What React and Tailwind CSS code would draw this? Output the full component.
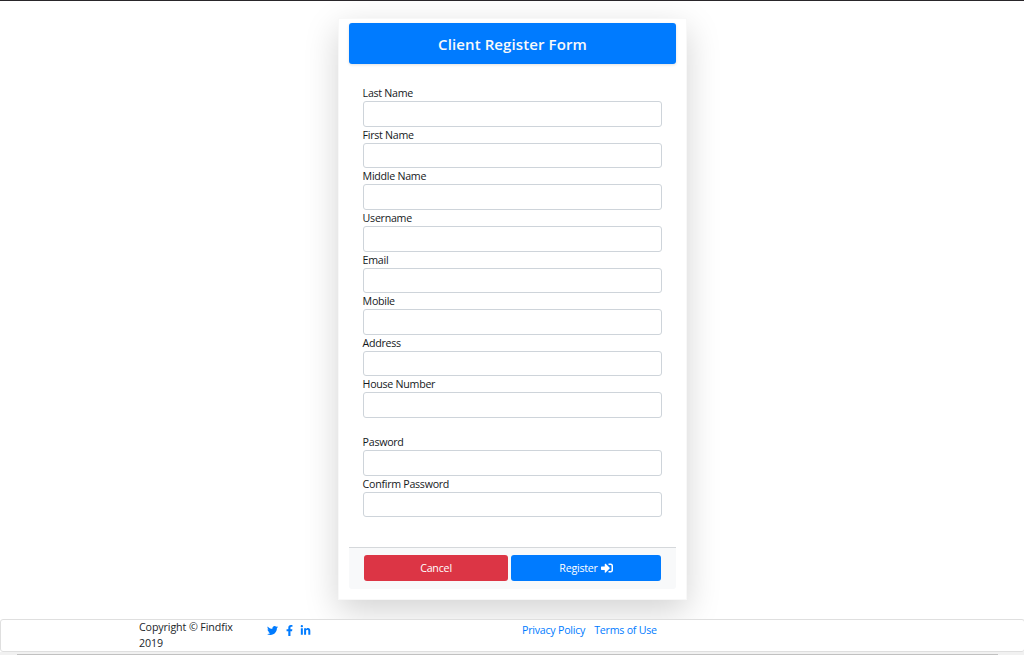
import { FaTwitter, FaFacebookF, FaLinkedinIn, FaSignInAlt } from "react-icons/fa";

const personal = [
  "Last Name",
  "First Name",
  "Middle Name",
  "Username",
  "Email",
  "Mobile",
  "Address",
  "House Number",
];
const credentials = ["Pasword", "Confirm Password"];

function Field({ label, type = "text" }) {
  return (
    <label className="block h-[41.65px]">
      <span className="-ml-[0.4px] block h-[15.96px] whitespace-nowrap text-[10.67px] leading-[16px] tracking-[-0.28px] text-[#15181b]">
        {label}
      </span>
      <input
        type={type}
        className="block h-[25.69px] w-full rounded-[3px] border border-[#ced4da] bg-white px-2 text-[10.67px] outline-none"
      />
    </label>
  );
}

export default function App() {
  return (
    <div className="flex h-[655px] w-full flex-col overflow-hidden border-t border-[#29262a] bg-white font-['Open_Sans','Noto_Sans',sans-serif] text-[#212529]">
      <main className="flex h-[618px] shrink-0 justify-center pt-[17px] pl-px">
        <form className="flex h-[582px] w-[349px] flex-col border border-[#f8f8f8] bg-white px-[10px] pt-[4px] shadow-[0_10.67px_32px_rgba(0,0,0,0.175)]">
          <h1 className="h-[41px] shrink-0 rounded-[3px] bg-[#007bff] text-center text-[15px] font-semibold leading-[43px] tracking-[0.1px] text-[#f8f9fa] shadow-[0_1px_3px_rgba(0,0,0,0.12)]">
            Client Register Form
          </h1>
          <div className="h-[483px] shrink-0 px-[14px] pt-[21px]">
            {personal.map((label) => (
              <Field key={label} label={label} />
            ))}
            <div className="pt-[16px]">
              {credentials.map((label) => (
                <Field key={label} label={label} type="password" />
              ))}
            </div>
          </div>
          <div className="flex h-[42px] shrink-0 gap-[3px] rounded-b-[3px] border-t border-[#d5d8db] bg-[#f8f9fa] px-[15px] pt-[7px]">
            <button
              type="button"
              className="h-[26px] w-[144px] rounded-[3px] bg-[#dc3545] text-[10.67px] leading-[26px] tracking-[-0.2px] text-white"
            >
              Cancel
            </button>
            <button
              type="button"
              className="flex h-[26px] w-[150px] items-center justify-center gap-[3px] rounded-[3px] bg-[#007bff] text-[10.67px] leading-[26px] tracking-[-0.24px] text-white"
            >
              Register <FaSignInAlt className="size-[12px]" />
            </button>
          </div>
        </form>
      </main>
      <footer className="relative flex h-[33px] w-[1025px] shrink-0 rounded-[3px] border border-[#dfdfdf] bg-white text-[10.67px] leading-[16px]">
        <p className="-mt-px ml-[138px] w-[128px] pr-[28px] tracking-[-0.1px]">
          Copyright © Findfix 2019
        </p>
        <div className="flex h-[20px] w-[255px] items-center text-[#007bff]">
          <FaTwitter className="size-[11px]" />
          <FaFacebookF className="ml-[6px] size-[11px]" />
          <FaLinkedinIn className="ml-[5px] size-[11px]" />
        </div>
        <nav className="flex gap-[9px] whitespace-nowrap pt-[2px] tracking-[-0.24px] text-[#007bff]">
          <a href="#privacy">Privacy Policy</a>
          <a href="#terms">Terms of Use</a>
        </nav>
      </footer>
      <div className="relative h-[3px] shrink-0 bg-[#f1f1f1] pl-[17px] pr-[26px] pt-[2px]">
        <div className="h-px bg-[#c1c1c1]" />
      </div>
    </div>
  );
}
